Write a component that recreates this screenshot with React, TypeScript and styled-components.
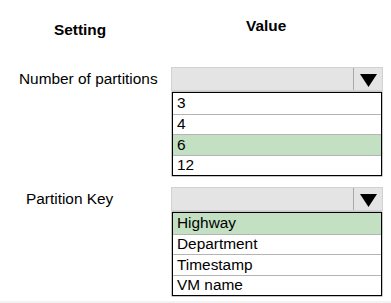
import React from "react";
import styled, { createGlobalStyle } from "styled-components";

const GlobalStyle = createGlobalStyle`
  html, body { margin: 0; padding: 0; background: #ffffff; }
  body { font-family: "Liberation Sans", Arial, sans-serif; color: #000; }
`;

const Page = styled.div`
  width: 391px;
  height: 303px;
  display: flex;
  flex-direction: column;
  overflow: hidden;
`;

const Content = styled.div`
  flex: 1;
  display: flex;
  flex-direction: column;
`;

const Footer = styled.div`
  height: 2px;
  background: #f3f3f3;
`;

const HeadRow = styled.div`
  display: grid;
  grid-template-columns: 171px 212px;
  height: 67px;
  align-items: start;
`;

const HeadCell = styled.div<{ $top: number; $left: number }>`
  font-weight: bold;
  font-size: 15.4px;
  line-height: 18px;
  margin-top: ${(p) => p.$top}px;
  padding-left: ${(p) => p.$left}px;
`;

const SettingRow = styled.div<{ $gap?: number }>`
  display: grid;
  grid-template-columns: 171px 212px;
  margin-top: ${(p) => p.$gap ?? 0}px;
`;

const Label = styled.div<{ $left: number }>`
  height: 24px;
  display: flex;
  align-items: center;
  padding-left: ${(p) => p.$left}px;
  font-size: 15.4px;
  line-height: 18px;
  white-space: nowrap;
`;

const Dropdown = styled.div`
  display: flex;
  flex-direction: column;
`;

const Select = styled.div`
  box-sizing: border-box;
  height: 24px;
  display: flex;
  background: #e4e4e4;
  border: 1px solid #d2d2d2;
`;

const SelectValue = styled.div`
  flex: 1;
`;

const ArrowCell = styled.div`
  width: 29px;
  border-left: 1px solid #a9a9a9;
  display: flex;
  align-items: center;
  justify-content: center;
  padding-top: 2px;
  box-sizing: border-box;
`;

const List = styled.div`
  box-sizing: border-box;
  margin: 1px 1px 0 1px;
  border: 1px solid #000;
  box-shadow: 0 0 0 0.5px rgba(0, 0, 0, 0.45);
  display: flex;
  flex-direction: column;
  background: #fff;
`;

const Option = styled.div<{ $selected?: boolean; $first?: boolean }>`
  box-sizing: border-box;
  height: 20.5px;
  padding-left: 4px;
  font-size: 15.4px;
  line-height: 18px;
  display: flex;
  align-items: center;
  background: ${(p) => (p.$selected ? "#c3e0c3" : "#fff")};
  border-top: ${(p) => (p.$first ? "none" : "1px solid #b4b4b4")};
`;

const Arrow = () => (
  <svg width="17" height="13" viewBox="0 0 17 13">
    <polygon points="0,0 17,0 8.5,13" fill="#000" />
  </svg>
);

type Setting = {
  label: string;
  indent: number;
  options: string[];
  selected: string;
  gap?: number;
};

const settings: Setting[] = [
  { label: "Number of partitions", indent: 19, options: ["3", "4", "6", "12"], selected: "6" },
  {
    label: "Partition Key",
    indent: 26,
    options: ["Highway", "Department", "Timestamp", "VM name"],
    selected: "Highway",
    gap: 11,
  },
];

export default function App() {
  return (
    <>
      <GlobalStyle />
      <Page>
        <Content>
          <HeadRow>
            <HeadCell $top={21} $left={54}>Setting</HeadCell>
            <HeadCell $top={17} $left={75}>Value</HeadCell>
          </HeadRow>
          {settings.map((s) => (
            <SettingRow key={s.label} $gap={s.gap}>
              <Label $left={s.indent}>{s.label}</Label>
              <Dropdown>
                <Select>
                  <SelectValue />
                  <ArrowCell>
                    <Arrow />
                  </ArrowCell>
                </Select>
                <List>
                  {s.options.map((o, i) => (
                    <Option key={o} $first={i === 0} $selected={o === s.selected}>
                      {o}
                    </Option>
                  ))}
                </List>
              </Dropdown>
            </SettingRow>
          ))}
        </Content>
        <Footer />
      </Page>
    </>
  );
}
